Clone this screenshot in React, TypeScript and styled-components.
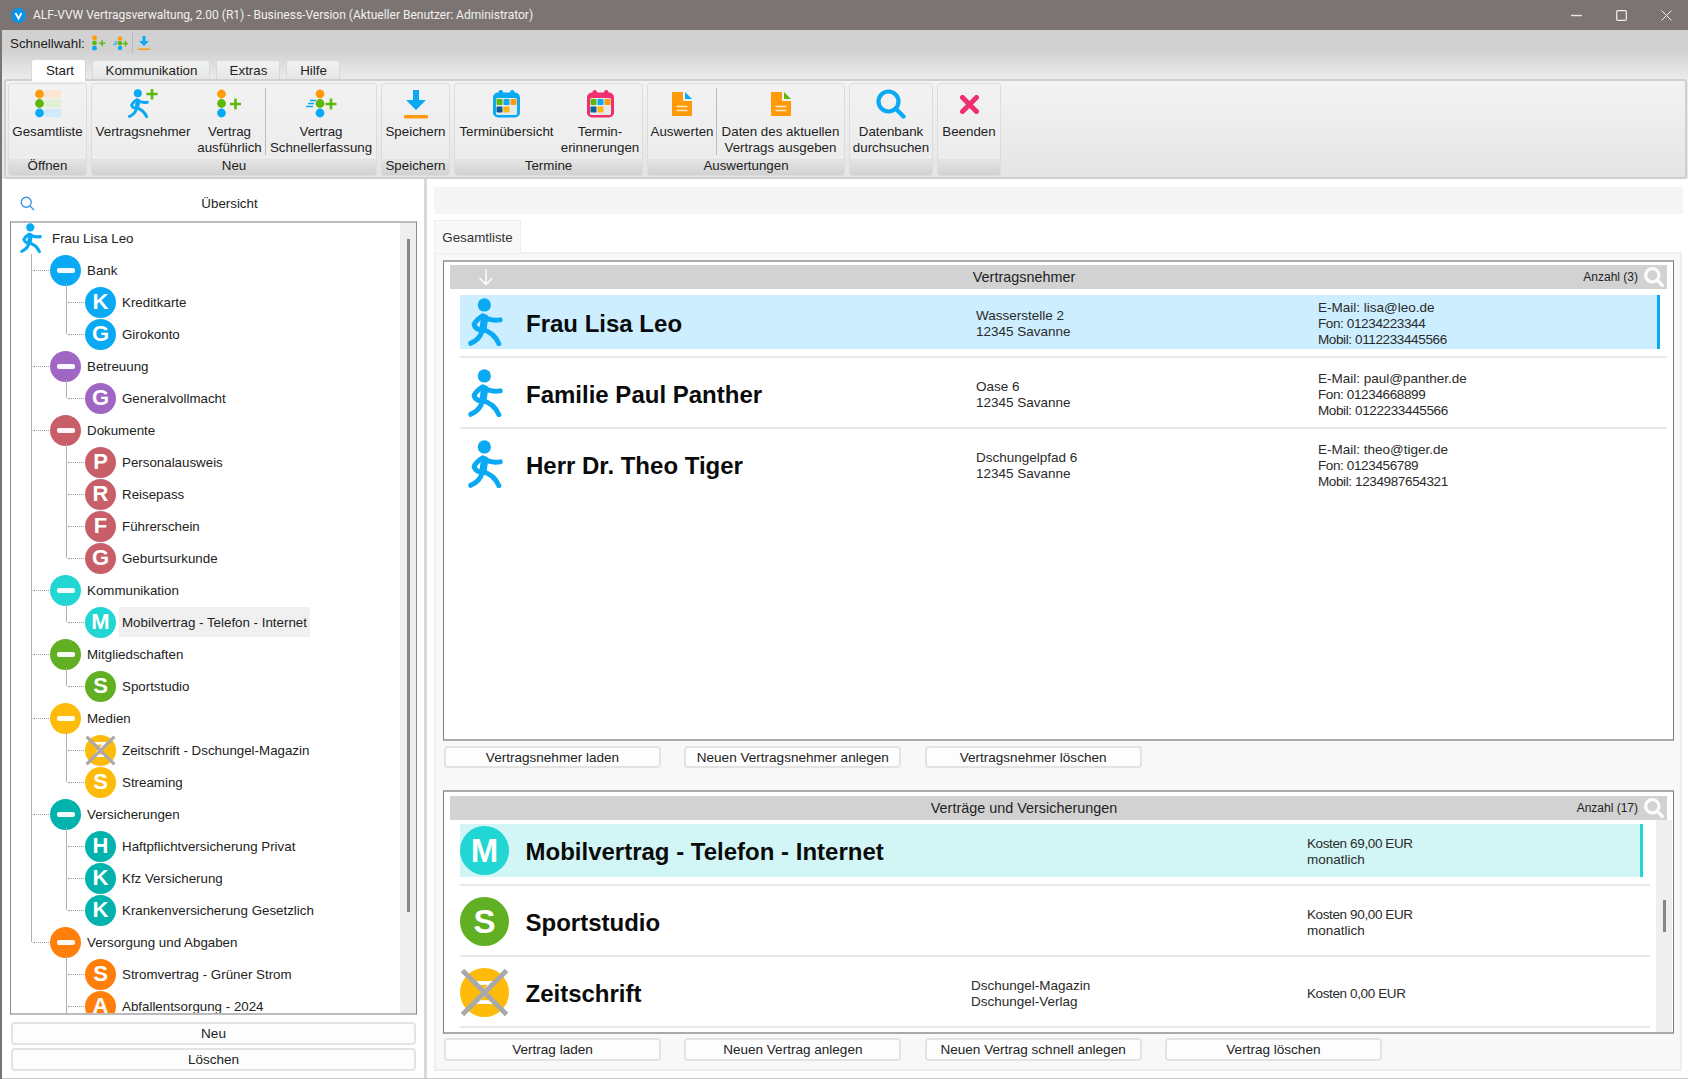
import React from "react";
import styled, { createGlobalStyle } from "styled-components";

const Global = createGlobalStyle`
  html, body { margin: 0; padding: 0; width: 1688px; height: 1079px; overflow: hidden; background: #fff; }
  * { box-sizing: border-box; }
  body { font-family: "Liberation Sans", Arial, sans-serif; font-size: 13.33px; color: #222; }
`;

const Window = styled.div`
  width: 1688px; height: 1079px; display: flex; flex-direction: column; background: #fff;
`;
const TitleBar = styled.div`
  height: 30px; flex: none; background: #7b7472; display: flex; align-items: center; padding-left: 11px; color: #f2f0ef;
  font-family: Roboto, "Noto Sans", sans-serif; font-size: 12px;
`;
const TitleText = styled.span`margin-left: 7px; flex: 1; white-space: nowrap;`;
const WinButton = styled.div`
  width: 45px; height: 30px; display: flex; align-items: center; justify-content: center;
  &:last-child { margin-right: -1px; }
`;
const Content = styled.div`
  flex: 1; min-height: 0; display: flex; flex-direction: column; border-left: 2px solid #7b7472;
`;
const Top = styled.div`
  height: 149px; flex: none; display: flex; flex-direction: column;
  background: linear-gradient(#d1d1d1 0, #d1d1d1 20px, #e9e9e9 46px, #e9e9e9 100%);
`;
const QuickBar = styled.div`
  height: 26px; flex: none; display: flex; align-items: center; padding-left: 8px; white-space: nowrap;
`;
const QuickLabel = styled.span`margin-right: 8px; width: 74px;`;
const QuickIcon = styled.span<{ $mr?: number }>`display: inline-flex; margin-right: ${p => p.$mr ?? 7}px;`;
const QuickSep = styled.span`width: 1px; height: 20px; background: #b8b8b8; margin-right: 5px;`;
const TabRow = styled.div`
  height: 23px; flex: none; display: flex; align-items: flex-end; gap: 6px; padding-left: 29px; position: relative; z-index: 1;
`;
const RibbonTab = styled.div<{ $w: number; $active?: boolean }>`
  width: ${p => p.$w}px; height: ${p => (p.$active ? 22 : 19)}px; margin-bottom: ${p => (p.$active ? -2 : 0)}px;
  display: flex; align-items: center; justify-content: center; padding: ${p => (p.$active ? "0 0 0 3px" : "1px 0 0 1px")};
  background: ${p => (p.$active ? "#fff" : "linear-gradient(#f2f2f2,#e6e6e6)")};
  border: 1px solid #d9d9d9; border-bottom: none; border-radius: 3px 3px 0 0;
`;
const Ribbon = styled.div`
  height: 100px; flex: none; margin: 0 1px 0 2px; display: flex; gap: 4px; padding: 2px;
  border: 2px solid #cfcfcf; border-radius: 3px; background: linear-gradient(#f3f3f3,#e5e5e5);
`;
const Group = styled.div<{ $w: number }>`
  width: ${p => p.$w}px; flex: none; display: flex; flex-direction: column; height: 93px;
  border: 1px solid #dcdcdc; border-radius: 3px; overflow: hidden; background: linear-gradient(#f2f2f2,#ebebeb);
`;
const GroupButtons = styled.div`flex: 1; display: flex; min-height: 0;`;
const GroupLabel = styled.div`
  height: 18px; flex: none; display: flex; align-items: center; justify-content: center; padding-bottom: 2px;
  border-top: 1px solid #f4f4f4; background: linear-gradient(#e6e6e6,#d2d2d2); color: #222;
`;
const RibbonButton = styled.div<{ $w: number }>`
  width: ${p => p.$w}px; flex: none; display: flex; flex-direction: column; align-items: center; padding-top: 5px;
  text-align: center; line-height: 16px; white-space: nowrap; color: #222;
`;
const RibbonIcon = styled.div`height: 30px; margin-bottom: 5px; display: flex; align-items: center; justify-content: center;`;
const RibbonSep = styled.div`width: 1px; flex: none; margin: 4px 0 2px; background: #bdbdbd;`;

const Body = styled.div`flex: 1; min-height: 0; display: grid; grid-template-columns: 422px 3px 1fr; border-bottom: 1px solid #c8c8c8;`;
const Sidebar = styled.div`display: flex; flex-direction: column; padding: 0 7px 0 8px; min-height: 0;`;
const SideHead = styled.div`height: 42px; flex: none; padding: 6px 0 0 10px; display: flex; align-items: center;`;
const SideTitle = styled.div`flex: 1; text-align: center; padding-left: 7px;`;
const Splitter = styled.div`background: #d9d9d9;`;
const TreeBox = styled.div`
  height: 794px; flex: none; display: flex; overflow: hidden;
  border: 2px solid #bbbbbf; border-left: 1px solid #8b8b8f; border-right: 1px solid #8b8b8f;
`;
const TreeList = styled.div`flex: 1; min-width: 0; overflow: hidden; margin-top: -1px;`;
const VScroll = styled.div`
  width: 16px; flex: none; background: #efefef; display: flex; justify-content: center;
`;
const EntryScroll = styled(VScroll)`margin-left: 6px;`;
const VThumb = styled.div<{ $top: number; $h: number }>`
  width: 3px; height: ${p => p.$h}px; margin-top: ${p => p.$top}px; background: #868686; margin-left: 1px;
`;
const TreeRow = styled.div<{ $pad: number }>`
  height: 32px; display: flex; align-items: center; padding-left: ${p => p.$pad}px; position: relative; white-space: nowrap;
`;
const Dotted = styled.span<{ $left: number }>`
  position: absolute; top: 16px; left: ${p => p.$left}px; width: 18px; border-top: 1px dotted #999;
`;
const TreeLabel = styled.span<{ $sel?: boolean; $ml?: number }>`
  margin-left: ${p => p.$ml ?? 3}px; padding: 0 3px; height: 30px; line-height: 32px; color: #222;
  background: ${p => (p.$sel ? "#f0f0f0" : "transparent")};
`;
const GroupNode = styled.div<{ $last?: boolean }>`
  position: relative;
  &::before { content: ""; position: absolute; left: 20px; top: 0; width: 1px; background: #b0b0b0;
    ${p => (p.$last ? "height: 16px;" : "bottom: 0;")} }
  & > * { position: relative; }
`;
const ChildList = styled.div`
  position: relative;
  &::before { content: ""; position: absolute; left: 55px; top: -2px; width: 1px; background: #b0b0b0; bottom: 16px; }
`;
const ChildListOpen = styled(ChildList)`&::before { bottom: 0; }`;
const Circle = styled.div<{ $size: number; $color: string; $font: number }>`
  width: ${p => p.$size}px; height: ${p => p.$size}px; flex: none; border-radius: 50%; background: ${p => p.$color};
  color: #fff; font-weight: 700; font-size: ${p => p.$font}px; display: flex; align-items: center; justify-content: center; position: relative; line-height: 1;
`;
const Minus = styled.span`width: 18px; height: 5px; background: #fff; border-radius: 2px; opacity: .95;`;
const CrossOverlay = styled.svg`position: absolute; left: 0; top: 0; width: 100%; height: 100%; overflow: visible;`;
const SideButtons = styled.div`display: flex; flex-direction: column; gap: 3px; margin: 7px 1px 0;`;
const FlatButton = styled.div<{ $h?: number }>`
  height: ${p => p.$h ?? 23}px; display: flex; align-items: center; justify-content: center;
  background: #fdfdfd; border: 2px solid #e3e3e3; border-radius: 4px; color: #222; white-space: nowrap; font-size: 13.55px;
`;

const Main = styled.div`display: flex; flex-direction: column; padding: 8px 5px 0 7px; min-height: 0;`;
const InfoBar = styled.div`height: 27px; flex: none; background: #f5f5f5;`;
const DocTab = styled.div`
  width: 87px; height: 33px; flex: none; margin-top: 6px; margin-bottom: -1px; display: flex; align-items: center; justify-content: center;
  background: #f8f8f8; border: 1px solid #eee; border-bottom: none; position: relative; z-index: 1; padding-top: 1px; color: #333;
`;
const DocPanel = styled.div`
  height: 819px; flex: none; width: 1248px; background: #f8f8f8; border: 2px solid #eee; padding: 6px 6px 0 7px; display: flex; flex-direction: column;
`;
const Panel = styled.div<{ $h: number }>`
  height: ${p => p.$h}px; flex: none; background: #fff; display: flex; flex-direction: column;
  border-top: 2px solid #aaa; border-bottom: 2px solid #aaa; border-left: 1px solid #7d7d7d; border-right: 1px solid #7d7d7d;
`;
const PanelHead = styled.div<{ $mt: number }>`
  height: 24px; flex: none; margin: ${p => p.$mt}px 6px 0; background: #d2d2d2; padding-left: 28px;
  display: grid; grid-template-columns: 16px 1060px 1fr; align-items: center; color: #222;
`;
const HeadTitle = styled.div`text-align: center; font-size: 14.4px;`;
const HeadRight = styled.div`display: flex; align-items: center; justify-content: flex-end; gap: 6px; padding-right: 3px; font-size: 12px;`;
const ArrowCell = styled.div`display: flex;`;
const PanelBody = styled.div<{ $pr: number }>`
  flex: 1; min-height: 0; display: flex; padding: 0 ${p => p.$pr}px 0 16px; overflow: hidden;
`;
const EntryList = styled.div<{ $pt: number }>`
  flex: 1; min-width: 0; padding-top: ${p => p.$pt}px; overflow: hidden;
`;
const EntryWrap = styled.div<{ $line?: boolean }>`
  height: 71px; display: flex; flex-direction: column;
  &::after { content: ""; display: ${p => (p.$line ? "block" : "none")}; height: 2px; margin-top: 7px; background: #e8e8e8; flex: none; }
`;
const Entry = styled.div<{ $cols: string; $bg?: string; $accent?: string; $mr: number; $compact?: boolean }>`
  height: ${p => (p.$compact ? 53 : 54)}px; flex: none; margin-right: ${p => p.$mr}px; display: grid; grid-template-columns: ${p => p.$cols}; align-items: center;
  background: ${p => p.$bg ?? "transparent"}; border-right: 3px solid ${p => p.$accent ?? "transparent"};
  --text-top: ${p => (p.$compact ? 2 : 3)}px;
`;
const EntryIcon = styled.div<{ $ml: number }>`margin-left: ${p => p.$ml}px; display: flex;`;
const EntryName = styled.div`font-weight: 700; font-size: 24px; color: #0b0b0b; white-space: nowrap; padding-top: var(--text-top);`;
const EntryText = styled.div`line-height: 16px; color: #2a2a2a; white-space: nowrap; font-size: 13.5px; padding-top: var(--text-top);`;
const TextLine = styled.div<{ $tight?: boolean }>`letter-spacing: ${p => (p.$tight ? "-0.38px" : "0")};`;
const ButtonRow = styled.div<{ $mt: number; $mb?: number }>`
  display: grid; grid-template-columns: repeat(4, 217px); column-gap: 23.3px; margin: ${p => p.$mt}px 0 ${p => p.$mb ?? 0}px 1px;
`;

const BLUE = "#0aa9f4", ORANGE = "#ff9a0a", GREEN = "#5cb80a", PINK = "#f0306e";

const PersonShape = ({ color = BLUE }: { color?: string }) => (
  <>
    <circle cx="49" cy="21" r="20" fill={color} />
    <g fill="none" stroke={color} strokeWidth="15" strokeLinecap="round" strokeLinejoin="round">
      <path d="M46 56 Q64 70 97 66" />
      <path d="M44 54 Q24 66 18 80 Q20 90 31 95" />
      <path d="M42 95 Q78 104 93 138" />
      <path d="M42 100 Q36 124 8 137" />
      <path d="M50 60 L45 92" strokeWidth="22" />
    </g>
  </>
);
const Person = ({ w, h }: { w: number; h: number }) => (
  <svg width={w} height={h} viewBox="0 0 105 145"><PersonShape /></svg>
);

const Dots = ({ bars }: { bars?: boolean }) => (
  <>
    {bars && (
      <>
        <rect x="9" y="1" width="17" height="8" rx="2" fill="#fae6d2" />
        <rect x="9" y="10.5" width="17" height="8" rx="2" fill="#e0f0d4" />
        <rect x="9" y="20" width="17" height="8" rx="2" fill="#cfeafc" />
      </>
    )}
    <circle cx="4.5" cy="5" r="4.4" fill={ORANGE} />
    <circle cx="4.5" cy="14.5" r="4.4" fill={GREEN} />
    <circle cx="4.5" cy="24" r="4.4" fill={BLUE} />
  </>
);
const ListIcon = () => <svg width="26" height="30" viewBox="0 0 26 30"><Dots bars /></svg>;
const Plus = ({ x, y, s = 5.5 }: { x: number; y: number; s?: number }) => (
  <path d={`M${x - s} ${y}H${x + s}M${x} ${y - s}V${y + s}`} stroke={GREEN} strokeWidth="2.6" fill="none" />
);
const DotsPlusIcon = ({ scale = 1 }: { scale?: number }) => (
  <svg width={25 * scale} height={30 * scale} viewBox="0 0 25 30"><Dots /><Plus x={18.5} y={15} /></svg>
);
const FastIcon = ({ scale = 1 }: { scale?: number }) => (
  <svg width={31 * scale} height={30 * scale} viewBox="0 0 31 30">
    <g transform="translate(9.5 0)"><Dots /></g>
    <path d="M4 11.5h6M2 14.5h6M0 17.5h7" stroke={BLUE} strokeWidth="1.6" />
    <Plus x={25} y={15} />
  </svg>
);
const PersonPlusIcon = () => (
  <svg width="30" height="30" viewBox="0 0 30 30">
    <svg x="0" y="0" width="21" height="29" viewBox="0 0 105 145"><PersonShape /></svg>
    <Plus x={24} y={5} />
  </svg>
);
const SaveIcon = ({ scale = 1 }: { scale?: number }) => (
  <svg width={24 * scale} height={29 * scale} viewBox="0 0 24 29">
    <path d="M9 0h6v10h7L12 20 2 10h7z" fill={BLUE} />
    <rect x="0" y="25" width="24" height="3.5" rx="1" fill={ORANGE} />
  </svg>
);
const CalendarIcon = ({ color }: { color: string }) => (
  <svg width="27" height="28" viewBox="0 0 27 28">
    <rect x="5.5" y="0" width="4.5" height="6" rx="2.2" fill={color} />
    <rect x="17" y="0" width="4.5" height="6" rx="2.2" fill={color} />
    <rect x="0" y="2.5" width="27" height="25" rx="5" fill={color} />
    <rect x="3" y="8" width="21" height="17" rx="1.5" fill="#e4e9ec" />
    <rect x="3.5" y="9" width="6" height="6" rx="1" fill={GREEN} />
    <rect x="10.5" y="9" width="6" height="6" rx="1" fill={BLUE} />
    <rect x="17.5" y="9" width="6" height="6" rx="1" fill={ORANGE} />
    <rect x="3.5" y="16.5" width="6" height="6" rx="1" fill="#0a5f94" />
    <rect x="10.5" y="16.5" width="6" height="6" rx="1" fill="#ffb60a" />
  </svg>
);
const DocIcon = ({ fold }: { fold: string }) => (
  <svg width="20" height="24" viewBox="0 0 20 24">
    <path d="M0 1a1 1 0 0 1 1-1h10v9h9v14a1 1 0 0 1-1 1H1a1 1 0 0 1-1-1z" fill={ORANGE} />
    <path d="M13 0l7 7h-7z" fill={fold} />
    <path d="M4.5 14.5h11M4.5 18.5h11" stroke="#ffe9c8" strokeWidth="1.7" />
  </svg>
);
const SearchIcon = ({ size, color, sw }: { size: number; color: string; sw: number }) => (
  <svg width={size} height={size} viewBox="0 0 30 30">
    <circle cx="12.5" cy="12.5" r="10" fill="none" stroke={color} strokeWidth={sw} />
    <path d="M20.5 20.5L27.5 27.5" stroke={color} strokeWidth={sw} strokeLinecap="round" />
  </svg>
);
const CloseIcon = () => (
  <svg width="19" height="19" viewBox="0 0 19 19">
    <path d="M2.5 2.5l14 14M16.5 2.5l-14 14" stroke={PINK} strokeWidth="5" strokeLinecap="round" />
  </svg>
);
const Cross = () => (
  <CrossOverlay viewBox="0 0 30 30">
    <path d="M1.5 1.5L28.5 28.5M28.5 1.5L1.5 28.5" stroke="#a9a9a9" strokeWidth="3" />
  </CrossOverlay>
);

const ribbon = [
  { w: 79, label: "Öffnen", items: [{ w: 77, icon: <ListIcon />, t: ["Gesamtliste"] }] },
  { w: 286, label: "Neu", items: [
    { w: 102, icon: <PersonPlusIcon />, t: ["Vertragsnehmer"] },
    { w: 71, icon: <DotsPlusIcon />, t: ["Vertrag", "ausführlich"] },
    "sep",
    { w: 110, icon: <FastIcon />, t: ["Vertrag", "Schnellerfassung"] },
  ] },
  { w: 69, label: "Speichern", items: [{ w: 67, icon: <SaveIcon />, t: ["Speichern"] }] },
  { w: 189, label: "Termine", items: [
    { w: 103, icon: <CalendarIcon color={BLUE} />, t: ["Terminübersicht"] },
    { w: 84, icon: <CalendarIcon color={PINK} />, t: ["Termin-", "erinnerungen"] },
  ] },
  { w: 198, label: "Auswertungen", items: [
    { w: 68, icon: <DocIcon fold={BLUE} />, t: ["Auswerten"] },
    "sep",
    { w: 127, icon: <DocIcon fold={GREEN} />, t: ["Daten des aktuellen", "Vertrags ausgeben"] },
  ] },
  { w: 84, label: "", items: [{ w: 82, icon: <SearchIcon size={30} color={BLUE} sw={4.2} />, t: ["Datenbank", "durchsuchen"] }] },
  { w: 64, label: "", items: [{ w: 62, icon: <CloseIcon />, t: ["Beenden"] }] },
] as const;

type Child = { n: string; l: string; x?: boolean; sel?: boolean };
const tree: { n: string; c: string; kids: Child[] }[] = [
  { n: "Bank", c: "#0aa9f4", kids: [{ n: "Kreditkarte", l: "K" }, { n: "Girokonto", l: "G" }] },
  { n: "Betreuung", c: "#a066c4", kids: [{ n: "Generalvollmacht", l: "G" }] },
  { n: "Dokumente", c: "#c85f68", kids: [{ n: "Personalausweis", l: "P" }, { n: "Reisepass", l: "R" }, { n: "Führerschein", l: "F" }, { n: "Geburtsurkunde", l: "G" }] },
  { n: "Kommunikation", c: "#22d6d3", kids: [{ n: "Mobilvertrag - Telefon - Internet", l: "M", sel: true }] },
  { n: "Mitgliedschaften", c: "#61b023", kids: [{ n: "Sportstudio", l: "S" }] },
  { n: "Medien", c: "#ffbb0a", kids: [{ n: "Zeitschrift - Dschungel-Magazin", l: "Z", x: true }, { n: "Streaming", l: "S" }] },
  { n: "Versicherungen", c: "#02b2ad", kids: [{ n: "Haftpflichtversicherung Privat", l: "H" }, { n: "Kfz Versicherung", l: "K" }, { n: "Krankenversicherung Gesetzlich", l: "K" }] },
  { n: "Versorgung und Abgaben", c: "#ff7f0a", kids: [{ n: "Stromvertrag - Grüner Strom", l: "S" }, { n: "Abfallentsorgung - 2024", l: "A" }] },
];

const people = [
  { n: "Frau Lisa Leo", a: ["Wasserstelle 2", "12345 Savanne"], k: ["E-Mail: lisa@leo.de", "Fon: 01234223344", "Mobil: 0112233445566"] },
  { n: "Familie Paul Panther", a: ["Oase 6", "12345 Savanne"], k: ["E-Mail: paul@panther.de", "Fon: 01234668899", "Mobil: 0122233445566"] },
  { n: "Herr Dr. Theo Tiger", a: ["Dschungelpfad 6", "12345 Savanne"], k: ["E-Mail: theo@tiger.de", "Fon: 0123456789", "Mobil: 1234987654321"] },
];
const contracts = [
  { n: "Mobilvertrag - Telefon - Internet", l: "M", c: "#22d6d3", a: [] as string[], k: ["Kosten 69,00 EUR", "monatlich"] },
  { n: "Sportstudio", l: "S", c: "#61b023", a: [] as string[], k: ["Kosten 90,00 EUR", "monatlich"] },
  { n: "Zeitschrift", l: "Z", c: "#ffbb0a", x: true, a: ["Dschungel-Magazin", "Dschungel-Verlag"], k: ["Kosten 0,00 EUR"] },
];

const Lines = ({ items }: { items: readonly string[] }) => (
  <EntryText>{items.map(s => <TextLine key={s} $tight={/^(Fon|Mobil|Kosten)/.test(s)}>{s}</TextLine>)}</EntryText>
);

export default function App() {
  return (
    <Window>
      <Global />
      <TitleBar>
        <svg width="15" height="15" viewBox="0 0 15 15">
          <circle cx="7.5" cy="7.5" r="7.5" fill="#0a93e6" />
          <path d="M4.5 5l3 5.5 3-5.5" fill="none" stroke="#fff" strokeWidth="1.8" />
        </svg>
        <TitleText>ALF-VVW Vertragsverwaltung, 2.00 (R1) - Business-Version (Aktueller Benutzer: Administrator)</TitleText>
        <WinButton><svg width="11" height="3" viewBox="0 0 11 3"><path d="M0 1.5h11" stroke="#e8e8e8" strokeWidth="1.4" /></svg></WinButton>
        <WinButton><svg width="11" height="11" viewBox="0 0 11 11"><rect x=".7" y=".7" width="9.6" height="9.6" rx="1" fill="none" stroke="#f0f0f0" strokeWidth="1.2" /></svg></WinButton>
        <WinButton><svg width="11" height="11" viewBox="0 0 11 11"><path d="M.5.5l10 10M10.5.5l-10 10" stroke="#f0f0f0" strokeWidth="1" /></svg></WinButton>
      </TitleBar>
      <Content>
        <Top>
          <QuickBar>
            <QuickLabel>Schnellwahl:</QuickLabel>
            <QuickIcon><DotsPlusIcon scale={0.55} /></QuickIcon>
            <QuickIcon $mr={4}><FastIcon scale={0.5} /></QuickIcon>
            <QuickSep />
            <QuickIcon><SaveIcon scale={0.5} /></QuickIcon>
          </QuickBar>
          <TabRow>
            <RibbonTab $w={55} $active>Start</RibbonTab>
            <RibbonTab $w={118}>Kommunikation</RibbonTab>
            <RibbonTab $w={64}>Extras</RibbonTab>
            <RibbonTab $w={54}>Hilfe</RibbonTab>
          </TabRow>
          <Ribbon>
            {ribbon.map((g, i) => (
              <Group key={i} $w={g.w}>
                <GroupButtons>
                  {g.items.map((it, j) =>
                    it === "sep" ? <RibbonSep key={j} /> : (
                      <RibbonButton key={j} $w={it.w}>
                        <RibbonIcon>{it.icon}</RibbonIcon>
                        {it.t.map(s => <div key={s}>{s}</div>)}
                      </RibbonButton>
                    )
                  )}
                </GroupButtons>
                <GroupLabel>{g.label}</GroupLabel>
              </Group>
            ))}
          </Ribbon>
        </Top>
        <Body>
          <Sidebar>
            <SideHead>
              <SearchIcon size={15} color="#3d8fe6" sw={2.6} />
              <SideTitle>Übersicht</SideTitle>
            </SideHead>
            <TreeBox>
              <TreeList>
                <TreeRow $pad={9}>
                  <Person w={22} h={30} />
                  <TreeLabel $ml={7}>Frau Lisa Leo</TreeLabel>
                </TreeRow>
                {tree.map((g, gi) => {
                  const last = gi === tree.length - 1;
                  const Kids = last ? ChildListOpen : ChildList;
                  return (
                    <GroupNode key={g.n} $last={last}>
                      <TreeRow $pad={39}>
                        <Dotted $left={22} />
                        <Circle $size={31} $color={g.c} $font={20}><Minus /></Circle>
                        <TreeLabel>{g.n}</TreeLabel>
                      </TreeRow>
                      <Kids>
                        {g.kids.map(k => (
                          <TreeRow key={k.n} $pad={74}>
                            <Dotted $left={57} />
                            <Circle $size={31} $color={g.c} $font={22}>
                              {k.l}
                              {k.x && <Cross />}
                            </Circle>
                            <TreeLabel $sel={k.sel}>{k.n}</TreeLabel>
                          </TreeRow>
                        ))}
                      </Kids>
                    </GroupNode>
                  );
                })}
              </TreeList>
              <VScroll><VThumb $top={16} $h={673} /></VScroll>
            </TreeBox>
            <SideButtons>
              <FlatButton>Neu</FlatButton>
              <FlatButton>Löschen</FlatButton>
            </SideButtons>
          </Sidebar>
          <Splitter />
          <Main>
            <InfoBar />
            <DocTab>Gesamtliste</DocTab>
            <DocPanel>
              <Panel $h={481}>
                <PanelHead $mt={3}>
                  <ArrowCell>
                    <svg width="16" height="17" viewBox="0 0 16 17">
                      <path d="M8 0v15M1.5 9L8 15.5 14.5 9" fill="none" stroke="#fff" strokeWidth="1.4" />
                    </svg>
                  </ArrowCell>
                  <HeadTitle>Vertragsnehmer</HeadTitle>
                  <HeadRight>Anzahl (3)<SearchIcon size={20} color="#fbfbfb" sw={5} /></HeadRight>
                </PanelHead>
                <PanelBody $pr={6}>
                  <EntryList $pt={6}>
                    {people.map((p, i) => (
                      <EntryWrap key={p.n} $line={i < 2}>
                        <Entry $cols="66px 450px 342px 1fr" $mr={7} $bg={i === 0 ? "#cdeefe" : undefined} $accent={i === 0 ? BLUE : undefined}>
                          <EntryIcon $ml={8}><Person w={35} h={48} /></EntryIcon>
                          <EntryName>{p.n}</EntryName>
                          <Lines items={p.a} />
                          <Lines items={p.k} />
                        </Entry>
                      </EntryWrap>
                    ))}
                  </EntryList>
                </PanelBody>
              </Panel>
              <ButtonRow $mt={5} $mb={22}>
                <FlatButton $h={22}>Vertragsnehmer laden</FlatButton>
                <FlatButton $h={22}>Neuen Vertragsnehmer anlegen</FlatButton>
                <FlatButton $h={22}>Vertragsnehmer löschen</FlatButton>
              </ButtonRow>
              <Panel $h={244}>
                <PanelHead $mt={4}>
                  <ArrowCell />
                  <HeadTitle>Verträge und Versicherungen</HeadTitle>
                  <HeadRight>Anzahl (17)<SearchIcon size={20} color="#fbfbfb" sw={5} /></HeadRight>
                </PanelHead>
                <PanelBody $pr={1}>
                  <EntryList $pt={4}>
                    {contracts.map((c, i) => (
                      <EntryWrap key={c.n} $line>
                        <Entry $compact $cols="65.5px 445.5px 336px 1fr" $mr={7} $bg={i === 0 ? "#d2f6f5" : undefined} $accent={i === 0 ? "#1fd6d3" : undefined}>
                          <Circle $size={49} $color={c.c} $font={33}>
                            {c.l}
                            {c.x && <Cross />}
                          </Circle>
                          <EntryName>{c.n}</EntryName>
                          {c.a.length ? <Lines items={c.a} /> : <span />}
                          <Lines items={c.k} />
                        </Entry>
                      </EntryWrap>
                    ))}
                  </EntryList>
                  <EntryScroll><VThumb $top={80} $h={32} /></EntryScroll>
                </PanelBody>
              </Panel>
              <ButtonRow $mt={4}>
                <FlatButton $h={23}>Vertrag laden</FlatButton>
                <FlatButton $h={23}>Neuen Vertrag anlegen</FlatButton>
                <FlatButton $h={23}>Neuen Vertrag schnell anlegen</FlatButton>
                <FlatButton $h={23}>Vertrag löschen</FlatButton>
              </ButtonRow>
            </DocPanel>
          </Main>
        </Body>
      </Content>
    </Window>
  );
}
